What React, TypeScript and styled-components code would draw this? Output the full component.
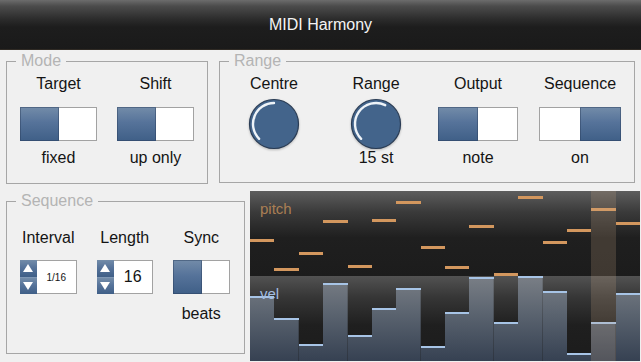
import React from 'react';
import styled, { createGlobalStyle } from 'styled-components';

const GlobalStyle = createGlobalStyle`
  html, body { margin: 0; padding: 0; background: #f0f0f0; }
  body { font-family: "Liberation Sans", Arial, sans-serif; }
  #root { width: 641px; height: 362px; }
`;

const Window = styled.div`
  width: 641px;
  height: 362px;
  display: flex;
  flex-direction: column;
  background: #f0f0f0;
  overflow: hidden;
`;

const TitleBar = styled.header`
  flex: none;
  height: 50px;
  box-sizing: border-box;
  display: flex;
  align-items: center;
  justify-content: center;
  background: linear-gradient(to bottom, #6c6c6c 0px, #4c4c4c 6px, #2c2c2c 19px, #1d1d1d 27px, #1a1a1a 100%);
  border-bottom: 1px solid #2f2a24;
  color: #f4f4f4;
  font-size: 16px;
`;

const Body = styled.main`
  flex: 1;
  display: flex;
  flex-direction: column;
  padding: 2px 1px 0 6px;
`;

const Row = styled.div<{ $gap: number; $h: number; $mt?: number }>`
  display: flex;
  gap: ${p => p.$gap}px;
  height: ${p => p.$h}px;
  margin-top: ${p => p.$mt ?? 0}px;
`;

const Group = styled.fieldset<{ $w: number; $h: number; $mt?: number }>`
  box-sizing: border-box;
  width: ${p => p.$w}px;
  height: ${p => p.$h}px;
  margin: ${p => p.$mt ?? 0}px 0 0 0;
  padding: 0 0 0 3px;
  min-width: 0;
  border: 1px solid #a6a6a6;
  display: flex;
  align-items: flex-start;
`;

const Legend = styled.legend`
  margin-left: 6px;
  padding: 0 5px;
  font-size: 16px;
  line-height: 18px;
  color: #b4b4b4;
`;

const Label = styled.div`
  font-size: 16px;
  line-height: 18px;
  color: #141414;
  white-space: nowrap;
`;

const Slot = styled.div`
  height: 50px;
  display: flex;
  align-items: center;
  justify-content: center;
`;

const Value = styled.div`
  font-size: 16px;
  line-height: 18px;
  min-height: 18px;
  color: #141414;
  white-space: nowrap;
`;

const Column = styled.div<{ $w: number; $pt: number; $slotGap: number; $valueGap: number }>`
  width: ${p => p.$w}px;
  flex: none;
  display: flex;
  flex-direction: column;
  align-items: center;
  padding-top: ${p => p.$pt}px;
  & > ${Slot} { margin-top: ${p => p.$slotGap}px; }
  & > ${Value} { margin-top: ${p => p.$valueGap}px; }
`;

const blueFill = 'linear-gradient(to bottom, #738ca9 0%, #56739a 45%, #3f5f87 100%)';

const ToggleBox = styled.div<{ $w: number; $right: boolean }>`
  width: ${p => p.$w}px;
  height: 34px;
  display: flex;
  flex-direction: ${p => (p.$right ? 'row-reverse' : 'row')};
  box-sizing: border-box;
`;

const Thumb = styled.div<{ $w: number }>`
  width: ${p => p.$w}px;
  flex: none;
  background: ${blueFill};
  box-shadow: inset 0 0 0 1px rgba(40, 60, 90, 0.45);
`;

const Track = styled.div<{ $right: boolean }>`
  flex: 1;
  background: #ffffff;
  border: 1px solid #a2a2a2;
  ${p => (p.$right ? 'border-right: none;' : 'border-left: none;')}
`;

function Toggle({ w, thumb, right = false }: { w: number; thumb?: number; right?: boolean }) {
  return (
    <ToggleBox $w={w} $right={right}>
      <Thumb $w={thumb ?? Math.round(w / 2)} />
      <Track $right={right} />
    </ToggleBox>
  );
}

const KnobSvg = styled.svg`
  width: 54px;
  height: 54px;
  overflow: visible;
  filter: drop-shadow(0 1px 1px rgba(0, 0, 0, 0.25));
`;

function Knob({ angle }: { angle: number }) {
  const cx = 27, cy = 27, r = 21;
  const pt = (deg: number) => {
    const a = (deg * Math.PI) / 180;
    return [cx + r * Math.sin(a), cy - r * Math.cos(a)];
  };
  const [sx, sy] = pt(-135);
  const [ex, ey] = pt(angle);
  const large = angle + 135 > 180 ? 1 : 0;
  return (
    <KnobSvg viewBox="0 0 54 54">
      <circle cx={cx} cy={cy} r={24.5} fill="#43648b" stroke="#2a3c54" strokeWidth={1.2} />
      <path
        d={`M ${sx} ${sy} A ${r} ${r} 0 ${large} 1 ${ex} ${ey}`}
        fill="none"
        stroke="#eef3f8"
        strokeWidth={2.4}
        strokeLinecap="round"
      />
    </KnobSvg>
  );
}

const SpinBox = styled.div<{ $w: number }>`
  width: ${p => p.$w}px;
  height: 34px;
  display: flex;
`;

const SpinButtons = styled.div`
  width: 17px;
  flex: none;
  display: flex;
  flex-direction: column;
`;

const SpinBtn = styled.div`
  flex: 1;
  display: flex;
  align-items: center;
  justify-content: center;
  background: ${blueFill};
  & + & { border-top: 1px solid #7f97b4; }
`;

const SpinField = styled.div<{ $fs: number }>`
  flex: 1;
  display: flex;
  align-items: center;
  justify-content: center;
  background: #fff;
  border: 1px solid #a2a2a2;
  border-left: none;
  font-size: ${p => p.$fs}px;
  color: #141414;
`;

function Spinner({ w, value, fs }: { w: number; value: string; fs: number }) {
  return (
    <SpinBox $w={w}>
      <SpinButtons>
        <SpinBtn>
          <svg width="10" height="8" viewBox="0 0 10 8"><polygon points="5,0 10,8 0,8" fill="#fff" /></svg>
        </SpinBtn>
        <SpinBtn>
          <svg width="10" height="8" viewBox="0 0 10 8"><polygon points="0,0 10,0 5,8" fill="#fff" /></svg>
        </SpinBtn>
      </SpinButtons>
      <SpinField $fs={fs}>{value}</SpinField>
    </SpinBox>
  );
}

/* Sequencer display */
const Display = styled.section`
  width: 390px;
  height: 170px;
  display: flex;
  flex-direction: column;
  overflow: hidden;
`;

const Lane = styled.div<{ $kind: 'pitch' | 'vel' }>`
  position: relative;
  height: 85px;
  display: grid;
  grid-template-columns: repeat(16, 1fr);
  background: ${p =>
    p.$kind === 'pitch'
      ? 'linear-gradient(to bottom, #5d5d5d 0%, #3a3a3a 25%, #1f1f1f 55%, #1c1c1c 100%)'
      : 'linear-gradient(to bottom, #525252 0%, #363636 25%, #1f1f1f 58%, #1c1c1c 100%)'};
`;

const LaneTag = styled.span<{ $color: string }>`
  position: absolute;
  left: 10px;
  top: 9px;
  font-size: 15px;
  line-height: 18px;
  color: ${p => p.$color};
  pointer-events: none;
`;

const Step = styled.div<{ $active: boolean; $kind: 'pitch' | 'vel' }>`
  position: relative;
  display: flex;
  flex-direction: column;
  justify-content: ${p => (p.$kind === 'vel' ? 'flex-end' : 'flex-start')};
  ${p =>
    p.$active &&
    `&::after {
      content: '';
      position: absolute;
      inset: 0;
      background: rgba(205, 170, 135, 0.2);
    }`}
`;

const PitchBar = styled.div`
  height: 3px;
  background: #d3975e;
`;

const VelBar = styled.div`
  box-sizing: border-box;
  border-top: 2px solid #a7c4e6;
  background: linear-gradient(to bottom, #7a7f86 0%, #5a636f 45%, #364152 100%);
  background-size: 100% 85px;
  background-position: bottom;
`;

const pitch = [48, 77, 61, 29, 74, 28, 10, 55, 75, 34, 82, 5, 50, 38, 17, 31];
const vel = [65, 43, 17, 78, 26, 53, 73, 15, 49, 84, 39, 85, 70, 8, 39, 68];
const activeStep = 14;

export default function App() {
  return (
    <>
      <GlobalStyle />
      <Window>
        <TitleBar>MIDI Harmony</TitleBar>
        <Body>
          <Row $gap={11} $h={132}>
            <Group $w={202} $h={132}>
              <Legend>Mode</Legend>
              <Column $w={97} $pt={5} $slotGap={6} $valueGap={0}>
                <Label>Target</Label>
                <Slot><Toggle w={77} /></Slot>
                <Value>fixed</Value>
              </Column>
              <Column $w={97} $pt={5} $slotGap={6} $valueGap={0}>
                <Label>Shift</Label>
                <Slot><Toggle w={77} /></Slot>
                <Value>up only</Value>
              </Column>
            </Group>
            <Group $w={416} $h={131}>
              <Legend>Range</Legend>
              <Column $w={102} $pt={5} $slotGap={6} $valueGap={0}>
                <Label>Centre</Label>
                <Slot><Knob angle={0} /></Slot>
                <Value />
              </Column>
              <Column $w={102} $pt={5} $slotGap={6} $valueGap={0}>
                <Label>Range</Label>
                <Slot><Knob angle={26} /></Slot>
                <Value>15 st</Value>
              </Column>
              <Column $w={102} $pt={5} $slotGap={6} $valueGap={0}>
                <Label>Output</Label>
                <Slot><Toggle w={80} /></Slot>
                <Value>note</Value>
              </Column>
              <Column $w={102} $pt={5} $slotGap={6} $valueGap={0}>
                <Label>Sequence</Label>
                <Slot><Toggle w={82} right /></Slot>
                <Value>on</Value>
              </Column>
            </Group>
          </Row>
          <Row $gap={5} $h={170} $mt={7}>
            <Group $w={239} $h={162} $mt={1}>
              <Legend>Sequence</Legend>
              <Column $w={76.5} $pt={19} $slotGap={5} $valueGap={3}>
                <Label>Interval</Label>
                <Slot><Spinner w={57} value="1/16" fs={10} /></Slot>
                <Value />
              </Column>
              <Column $w={76.5} $pt={19} $slotGap={5} $valueGap={3}>
                <Label>Length</Label>
                <Slot><Spinner w={56} value="16" fs={16} /></Slot>
                <Value />
              </Column>
              <Column $w={76.5} $pt={19} $slotGap={5} $valueGap={3}>
                <Label>Sync</Label>
                <Slot><Toggle w={57} thumb={29} /></Slot>
                <Value>beats</Value>
              </Column>
            </Group>
            <Display>
              <Lane $kind="pitch">
                {pitch.map((y, i) => (
                  <Step key={i} $kind="pitch" $active={i === activeStep}>
                    <PitchBar style={{ marginTop: y }} />
                  </Step>
                ))}
                <LaneTag $color="#aa7f54">pitch</LaneTag>
              </Lane>
              <Lane $kind="vel">
                {vel.map((h, i) => (
                  <Step key={i} $kind="vel" $active={i === activeStep}>
                    <VelBar style={{ height: h }} />
                  </Step>
                ))}
                <LaneTag $color="#a2bde0">vel</LaneTag>
              </Lane>
            </Display>
          </Row>
        </Body>
      </Window>
    </>
  );
}
